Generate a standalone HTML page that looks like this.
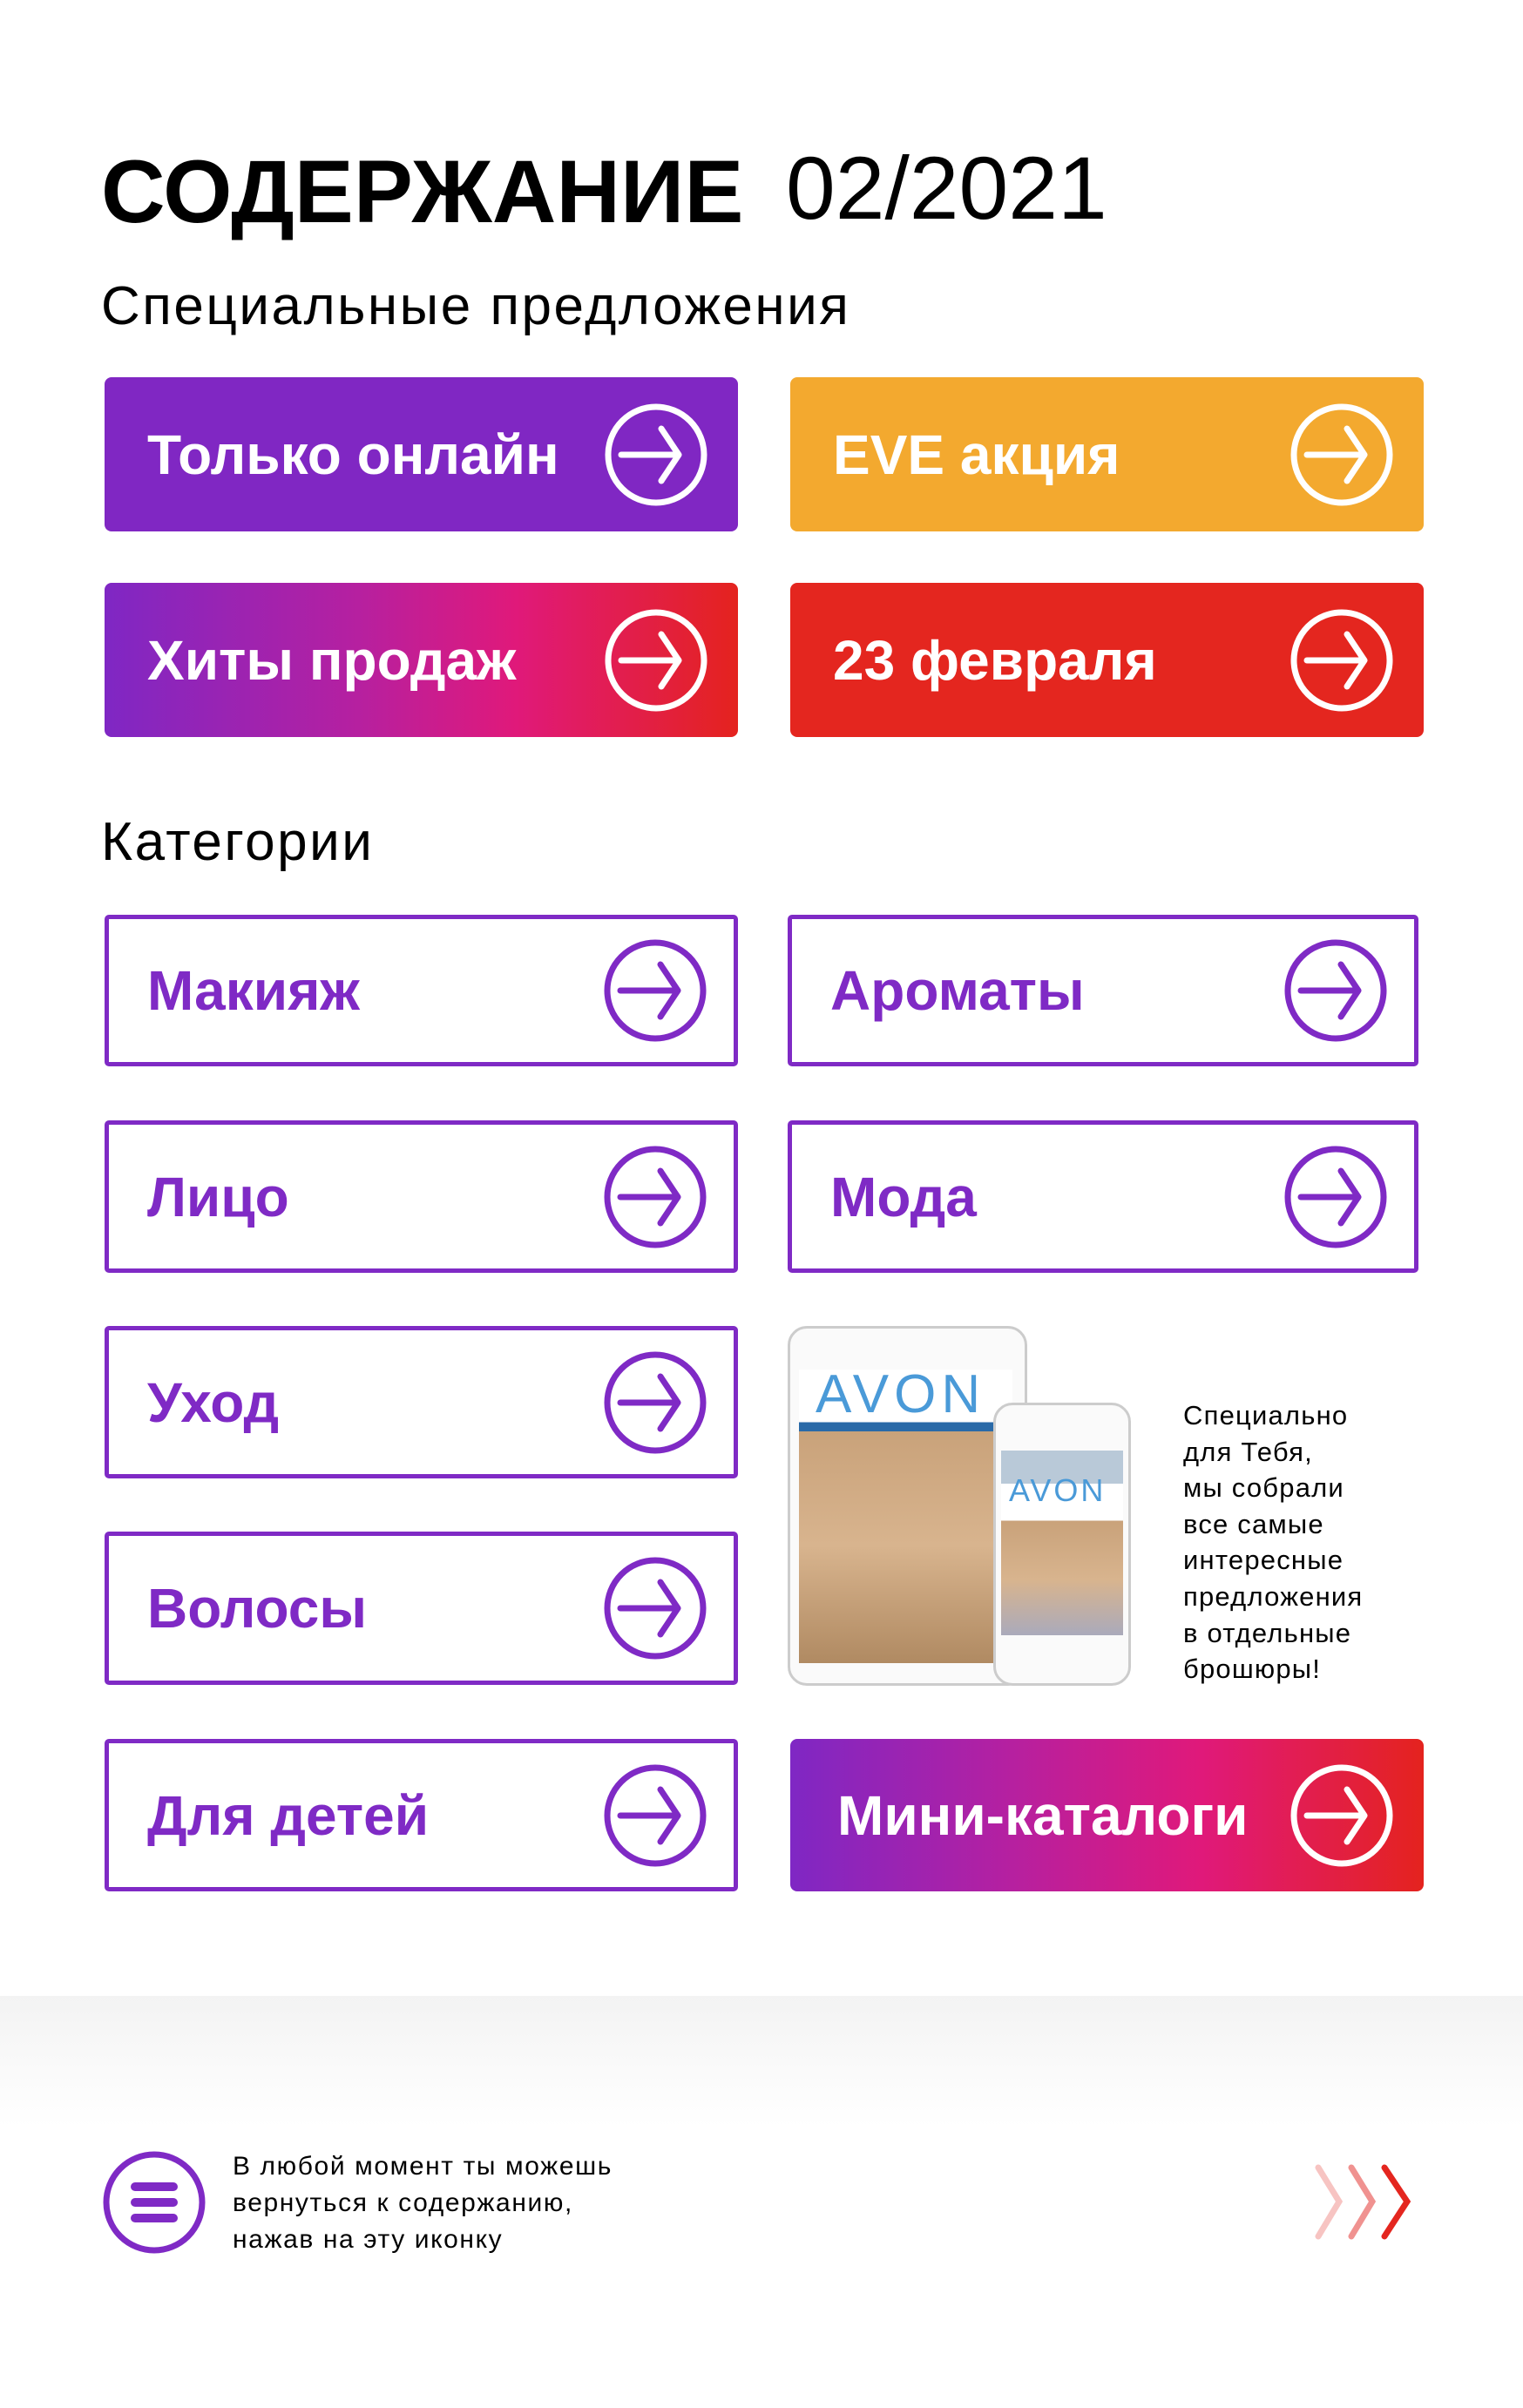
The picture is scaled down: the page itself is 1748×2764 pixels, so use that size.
<!DOCTYPE html>
<html><head><meta charset="utf-8"><style>
*{margin:0;padding:0;box-sizing:border-box}
body{width:1748px;height:2764px;background:#fff;font-family:"Liberation Sans","Noto Sans CJK SC",sans-serif;position:relative;overflow:hidden;color:#000}
.a{position:absolute}
.btn{position:absolute;border-radius:8px;color:#fff;font-weight:bold;font-size:64px;display:flex;align-items:center;padding-left:49px}
.ob{position:absolute;border:5px solid #7f2ac5;border-radius:5px;color:#7f2ac5;font-weight:bold;font-size:64px;display:flex;align-items:center;padding-left:44px}
.ic{position:absolute;top:50%;margin-top:-60px;right:34px;width:120px;height:120px}
.ob .ic{right:30px}
</style></head><body>
<div class="a" style="left:116px;top:162px;font-size:102px;font-weight:bold">СОДЕРЖАНИЕ</div>
<div class="a" style="left:902px;top:158px;font-size:102px">02/2021</div>
<div class="a" style="left:116px;top:316px;font-size:62px;letter-spacing:2.5px">Специальные предложения</div>

<div class="btn" style="left:120px;top:433px;width:727px;height:177px;background:#8027c3">Только онлайн<svg class="ic" viewBox="0 0 120 120"><circle cx="60" cy="60" r="55" fill="none" stroke="#fff" stroke-width="7"/><path d="M20 60H84M66 30L86 60L66 90" fill="none" stroke="#fff" stroke-width="7" stroke-linecap="round" stroke-linejoin="round"/></svg></div>
<div class="btn" style="left:907px;top:433px;width:727px;height:177px;background:#f3a92f">EVE акция<svg class="ic" viewBox="0 0 120 120"><circle cx="60" cy="60" r="55" fill="none" stroke="#fff" stroke-width="7"/><path d="M20 60H84M66 30L86 60L66 90" fill="none" stroke="#fff" stroke-width="7" stroke-linecap="round" stroke-linejoin="round"/></svg></div>
<div class="btn" style="left:120px;top:669px;width:727px;height:177px;background:linear-gradient(90deg,#7f27c4,#b620a0 40%,#e0197a 65%,#e4231e)">Хиты продаж<svg class="ic" viewBox="0 0 120 120"><circle cx="60" cy="60" r="55" fill="none" stroke="#fff" stroke-width="7"/><path d="M20 60H84M66 30L86 60L66 90" fill="none" stroke="#fff" stroke-width="7" stroke-linecap="round" stroke-linejoin="round"/></svg></div>
<div class="btn" style="left:907px;top:669px;width:727px;height:177px;background:#e4261f">23 февраля<svg class="ic" viewBox="0 0 120 120"><circle cx="60" cy="60" r="55" fill="none" stroke="#fff" stroke-width="7"/><path d="M20 60H84M66 30L86 60L66 90" fill="none" stroke="#fff" stroke-width="7" stroke-linecap="round" stroke-linejoin="round"/></svg></div>

<div class="a" style="left:116px;top:931px;font-size:62px;letter-spacing:2.5px">Категории</div>

<div class="ob" style="left:120px;top:1050px;width:727px;height:174px">Макияж<svg class="ic" viewBox="0 0 120 120"><circle cx="60" cy="60" r="55" fill="none" stroke="#7f2ac5" stroke-width="7"/><path d="M20 60H84M66 30L86 60L66 90" fill="none" stroke="#7f2ac5" stroke-width="7" stroke-linecap="round" stroke-linejoin="round"/></svg></div>
<div class="ob" style="left:904px;top:1050px;width:724px;height:174px">Ароматы<svg class="ic" viewBox="0 0 120 120"><circle cx="60" cy="60" r="55" fill="none" stroke="#7f2ac5" stroke-width="7"/><path d="M20 60H84M66 30L86 60L66 90" fill="none" stroke="#7f2ac5" stroke-width="7" stroke-linecap="round" stroke-linejoin="round"/></svg></div>
<div class="ob" style="left:120px;top:1286px;width:727px;height:175px">Лицо<svg class="ic" viewBox="0 0 120 120"><circle cx="60" cy="60" r="55" fill="none" stroke="#7f2ac5" stroke-width="7"/><path d="M20 60H84M66 30L86 60L66 90" fill="none" stroke="#7f2ac5" stroke-width="7" stroke-linecap="round" stroke-linejoin="round"/></svg></div>
<div class="ob" style="left:904px;top:1286px;width:724px;height:175px">Мода<svg class="ic" viewBox="0 0 120 120"><circle cx="60" cy="60" r="55" fill="none" stroke="#7f2ac5" stroke-width="7"/><path d="M20 60H84M66 30L86 60L66 90" fill="none" stroke="#7f2ac5" stroke-width="7" stroke-linecap="round" stroke-linejoin="round"/></svg></div>
<div class="ob" style="left:120px;top:1522px;width:727px;height:175px">Уход<svg class="ic" viewBox="0 0 120 120"><circle cx="60" cy="60" r="55" fill="none" stroke="#7f2ac5" stroke-width="7"/><path d="M20 60H84M66 30L86 60L66 90" fill="none" stroke="#7f2ac5" stroke-width="7" stroke-linecap="round" stroke-linejoin="round"/></svg></div>
<div class="ob" style="left:120px;top:1758px;width:727px;height:176px">Волосы<svg class="ic" viewBox="0 0 120 120"><circle cx="60" cy="60" r="55" fill="none" stroke="#7f2ac5" stroke-width="7"/><path d="M20 60H84M66 30L86 60L66 90" fill="none" stroke="#7f2ac5" stroke-width="7" stroke-linecap="round" stroke-linejoin="round"/></svg></div>
<div class="ob" style="left:120px;top:1996px;width:727px;height:175px">Для детей<svg class="ic" viewBox="0 0 120 120"><circle cx="60" cy="60" r="55" fill="none" stroke="#7f2ac5" stroke-width="7"/><path d="M20 60H84M66 30L86 60L66 90" fill="none" stroke="#7f2ac5" stroke-width="7" stroke-linecap="round" stroke-linejoin="round"/></svg></div>

<!-- devices -->
<div class="a" style="left:904px;top:1522px;width:275px;height:413px;border:3px solid #ccc;border-radius:22px;background:#fafafa"></div>
<div class="a" style="left:917px;top:1572px;width:245px;height:337px;background:linear-gradient(180deg,#fff 0,#fff 18%,#2a6aa8 18%,#2a6aa8 21%,#c9a27a 21%,#d8b48e 60%,#b08a62 100%)"></div>
<div class="a" style="left:936px;top:1565px;font-size:62px;color:#4a9ad8;letter-spacing:6px">AVON</div>
<div class="a" style="left:1140px;top:1610px;width:158px;height:325px;border:3px solid #ccc;border-radius:22px;background:#fafafa"></div>
<div class="a" style="left:1149px;top:1665px;width:140px;height:212px;background:linear-gradient(180deg,#b9c9d8 0,#b9c9d8 18%,#fff 18%,#fff 38%,#c9a27a 38%,#d8b48e 70%,#aab 100%)"></div>
<div class="a" style="left:1158px;top:1690px;font-size:36px;color:#4a9ad8;letter-spacing:3px">AVON</div>

<div class="a" style="left:1358px;top:1604px;font-size:31px;line-height:41.6px;letter-spacing:1.2px">Специально<br>для Тебя,<br>мы собрали<br>все самые<br>интересные<br>предложения<br>в отдельные<br>брошюры!</div>

<div class="btn" style="left:907px;top:1996px;width:727px;height:175px;background:linear-gradient(90deg,#7f27c4,#b620a0 35%,#e0197a 65%,#e4231e);padding-left:54px;font-size:64px">Мини-каталоги<svg class="ic" viewBox="0 0 120 120"><circle cx="60" cy="60" r="55" fill="none" stroke="#fff" stroke-width="7"/><path d="M20 60H84M66 30L86 60L66 90" fill="none" stroke="#fff" stroke-width="7" stroke-linecap="round" stroke-linejoin="round"/></svg></div>

<div class="a" style="left:0;top:2291px;width:1748px;height:150px;background:linear-gradient(180deg,#f3f3f3,#fff)"></div>
<svg class="a" style="left:117px;top:2468px" width="120" height="120" viewBox="0 0 120 120"><circle cx="60" cy="60" r="55" fill="none" stroke="#7f2ac5" stroke-width="7"/><path d="M38 42H82M38 60H82M38 78H82" stroke="#7f2ac5" stroke-width="10" stroke-linecap="round"/></svg>
<div class="a" style="left:267px;top:2466px;font-size:30px;line-height:42px;letter-spacing:1.6px">В любой момент ты можешь<br>вернуться к содержанию,<br>нажав на эту иконку</div>
<svg class="a" style="left:1505px;top:2480px" width="130" height="95" viewBox="0 0 130 95"><path d="M8 8L32 47L8 87" fill="none" stroke="#f7c4c2" stroke-width="7" stroke-linecap="round"/><path d="M46 8L70 47L46 87" fill="none" stroke="#f09290" stroke-width="7" stroke-linecap="round"/><path d="M84 8L110 47L84 87" fill="none" stroke="#e4261f" stroke-width="7" stroke-linecap="round"/></svg>
</body></html>
